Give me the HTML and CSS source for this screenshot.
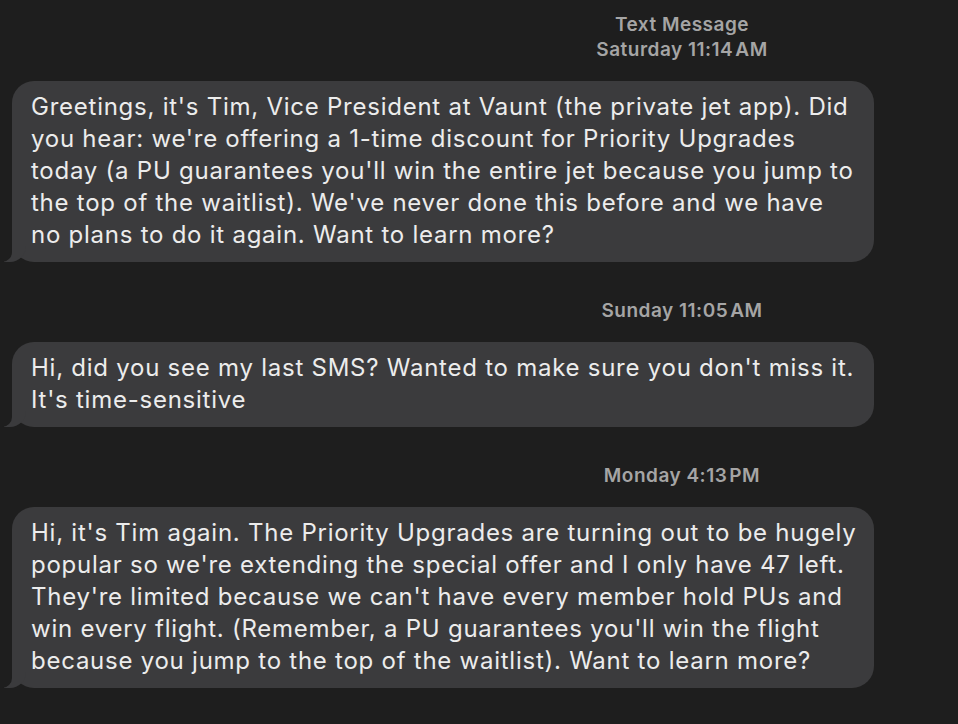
FILE: index.html
```html
<!DOCTYPE html>
<html lang="en">
<head>
    <meta charset="UTF-8">
    <meta name="viewport" content="width=device-width, initial-scale=1.0">
    <title>Messages</title>
    <link rel="stylesheet" href="styles.css">
</head>
<body>
    <div class="thread">
        <div class="stamp first">Text Message<br>Saturday 11:14&#8202;AM</div>
        <div class="bubble">
            Greetings, it's Tim, Vice President at Vaunt (the private jet app). Did<br>
            you hear: we're offering a 1-time discount for Priority Upgrades<br>
            today (a PU guarantees you'll win the entire jet because you jump to<br>
            the top of the waitlist). We've never done this before and we have<br>
            no plans to do it again. Want to learn more?
        </div>

        <div class="stamp">Sunday 11:05&#8202;AM</div>
        <div class="bubble">
            Hi, did you see my last SMS? Wanted to make sure you don't miss it.<br>
            It's time-sensitive
        </div>

        <div class="stamp">Monday 4:13&#8202;PM</div>
        <div class="bubble">
            Hi, it's Tim again. The Priority Upgrades are turning out to be hugely<br>
            popular so we're extending the special offer and I only have 47 left.<br>
            They're limited because we can't have every member hold PUs and<br>
            win every flight. (Remember, a PU guarantees you'll win the flight<br>
            because you jump to the top of the waitlist). Want to learn more?
        </div>
    </div>
</body>
</html>
```

FILE: styles.css
```css
body {
    font-family: Inter, "Liberation Sans", Arial, sans-serif;
    margin: 0;
    padding: 0;
    background: #1e1e1e;
    color: #ececec;
}
.thread {
    padding: 12px 0 30px 12px;
}
.stamp {
    margin: 36px 0 19px 394px;
    text-align: center;
    color: #a5a5a5;
    font-size: 19px;
    font-weight: 600;
    letter-spacing: 0.5px;
    line-height: 25px;
}
.stamp.first {
    margin-top: 0;
}
.bubble {
    position: relative;
    box-sizing: border-box;
    width: 862px;
    background: #3b3b3d;
    border-radius: 22px;
    padding: 10px 12px 11px 19px;
    font-size: 24px;
    letter-spacing: 0.75px;
    line-height: 32px;
    white-space: nowrap;
}
.bubble::before {
    content: "";
    position: absolute;
    bottom: 0;
    left: -8px;
    width: 22px;
    height: 22px;
    background: #3b3b3d;
    border-bottom-right-radius: 16px;
}
.bubble::after {
    content: "";
    position: absolute;
    bottom: 0;
    left: -12px;
    width: 12px;
    height: 22px;
    background: #1e1e1e;
    border-bottom-right-radius: 10px;
}
```
